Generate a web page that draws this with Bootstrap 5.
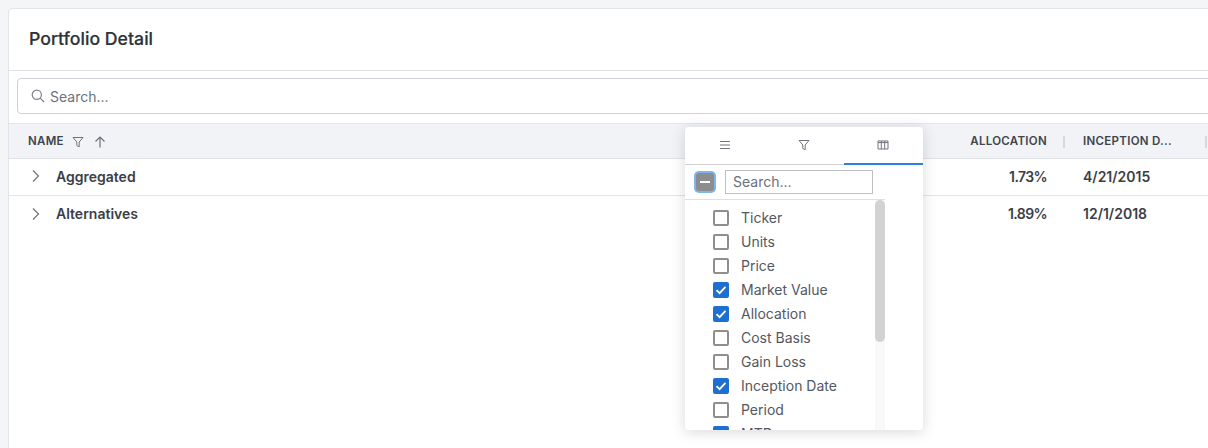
<!DOCTYPE html>
<html lang="en">
<head>
<meta charset="utf-8">
<title>Portfolio Detail</title>
<link href="https://cdn.jsdelivr.net/npm/bootstrap@5.3.0/dist/css/bootstrap.min.css" rel="stylesheet">
<style>
html,body{height:448px;overflow:hidden}
body{background:#f4f5f7;font-family:Inter,"Liberation Sans",sans-serif;color:#393d45;padding:8px 0 0 8px}
.pf-card{background:#fff;border:1px solid #e3e4e8;border-radius:4px 0 0 0;height:445px;margin-right:-40px;position:relative;overflow:hidden}
.pf-head{height:62px;border-bottom:1px solid #e2e3e6;padding:0 0 2px 20px}
.pf-title{font-size:17.7px;font-weight:500;color:#2f3239;margin:0;-webkit-text-stroke:.2px #2f3239}
.pf-search{height:36px;margin:7px 0 9px 8px;border:1px solid #cfd1da;border-radius:4px;padding-left:13px;color:#6c7280;font-size:14px;gap:5px}
.pf-thead{height:36px;padding-top:2px;background:#f1f3f6;border-top:1px solid #e5e6ea;border-bottom:1px solid #dfe1e5;font-size:11.5px;font-weight:600;color:#40444c;letter-spacing:.3px}
.pf-row{height:37px;padding-bottom:2px;font-size:14px;font-weight:600;color:#3b3e46}
.pf-row-line{border-bottom:1px solid #e4e5e8}
.pf-name{flex:1 1 auto;padding-left:19px;min-width:0}
.pf-name-row{padding-left:23px}
.pf-chev{width:24px;flex:none}
.pf-alloc{width:200px;flex:none;padding-right:18px;text-align:right;position:relative}
.pf-pct{letter-spacing:-.6px}
.pf-date{width:142px;flex:none;padding-left:18px;position:relative}
.pf-rest{width:40px;flex:none}
.pf-sep{position:absolute;right:0;top:50%;margin-top:-6px;width:2px;height:12px;background:#d6d8dd}
.pf-ico1{margin-left:8px}
.pf-ico2{margin-left:9px}
.pf-menu{position:absolute;left:676px;top:118px;width:238px;height:303px;background:#fff;border-radius:4px;box-shadow:0 2px 14px rgba(60,66,80,.2);overflow:hidden;z-index:5}
.pf-tabs{height:38px;border-bottom:1px solid #cfd0d3}
.pf-tab{flex:1;height:38px;margin-bottom:-1px;padding-bottom:3px}
.pf-tab-on{border-bottom:2px solid #2b80e0;padding-bottom:1px}
.pf-filter{height:35px;border-bottom:1px solid #dee0e3;margin-right:38px;padding-left:11px;gap:9px}
.pf-tri{width:18px;height:18px;border-radius:3px;background:#8d8d8d;box-shadow:0 0 0 2px #7db5f0;position:relative;flex:none}
.pf-tri::after{content:"";position:absolute;left:4px;right:4px;top:8px;height:2px;background:#fff}
.pf-input{width:148px;height:24px;border:1px solid #bdbfc1;padding-left:7px;font-size:14px;color:#6b6f78;line-height:22px;margin-left:2px}
.pf-body{position:relative;padding-left:28px;padding-top:6px}
.pf-item{height:24px;font-size:14px;color:#54585f;gap:12px}
.pf-label{margin-top:-2px}
.pf-box{width:16px;height:16px;border:2px solid #8e8e8e;border-radius:2px;flex:none;background:#fff}
.pf-box-on{background:#1f6fd0;border-color:#1f6fd0}
.pf-box svg{display:block}
.pf-track{position:absolute;left:190px;top:0;width:10px;height:240px;background:#f8f8f8}
.pf-thumb{width:10px;height:142px;background:#d2d2d2;border-radius:5px}
</style>
</head>
<body>
<div class="pf-card">
  <div class="pf-head d-flex align-items-center"><h1 class="pf-title">Portfolio Detail</h1></div>
  <div class="pf-search d-flex align-items-center">
    <svg width="14" height="14" viewBox="0 0 14 14" fill="none" stroke="#7c808a" stroke-width="1.2"><circle cx="5.8" cy="5.8" r="4.6"/><path d="M9.2 9.2 13 13"/></svg>
    <span>Search...</span>
  </div>
  <div class="pf-thead d-flex align-items-center">
    <div class="pf-name d-flex align-items-center">
      <span>NAME</span>
      <svg class="pf-ico1" width="12" height="12" viewBox="0 0 12 12" fill="none" stroke="#6f737c" stroke-width="1"><path d="M1 1.5h10L7.2 6v4.8L4.8 9.5V6z"/></svg>
      <svg class="pf-ico2" width="14" height="14" viewBox="0 0 14 14" fill="none" stroke="#6f737c" stroke-width="1.2"><path d="M7 12.5V2M2.5 6.5 7 2l4.5 4.5"/></svg>
    </div>
    <div class="pf-alloc">ALLOCATION<span class="pf-sep"></span></div>
    <div class="pf-date">INCEPTION D...<span class="pf-sep"></span></div>
    <div class="pf-rest"></div>
  </div>
  <div class="pf-row pf-row-line d-flex align-items-center">
    <div class="pf-name pf-name-row d-flex align-items-center">
      <svg class="pf-chev" width="24" height="14" viewBox="0 0 24 14" fill="none" stroke="#6f737c" stroke-width="1.2"><path d="M1 1.5 6.5 7 1 12.5"/></svg>
      <span>Aggregated</span>
    </div>
    <div class="pf-alloc"><span class="pf-pct">1.73%</span></div>
    <div class="pf-date">4/21/2015</div>
    <div class="pf-rest"></div>
  </div>
  <div class="pf-row d-flex align-items-center">
    <div class="pf-name pf-name-row d-flex align-items-center">
      <svg class="pf-chev" width="24" height="14" viewBox="0 0 24 14" fill="none" stroke="#6f737c" stroke-width="1.2"><path d="M1 1.5 6.5 7 1 12.5"/></svg>
      <span>Alternatives</span>
    </div>
    <div class="pf-alloc"><span class="pf-pct">1.89%</span></div>
    <div class="pf-date">12/1/2018</div>
    <div class="pf-rest"></div>
  </div>
  <div class="pf-menu">
    <div class="pf-tabs d-flex">
      <div class="pf-tab d-flex align-items-center justify-content-center"><svg width="12" height="10" viewBox="0 0 12 10" fill="none" stroke="#70747d" stroke-width="1"><path d="M1 1.5h10M1 5h10M1 8.5h10"/></svg></div>
      <div class="pf-tab d-flex align-items-center justify-content-center"><svg width="12" height="12" viewBox="0 0 12 12" fill="none" stroke="#70747d" stroke-width="1"><path d="M1 1.5h10L7.2 6v4.8L4.8 9.5V6z"/></svg></div>
      <div class="pf-tab pf-tab-on d-flex align-items-center justify-content-center"><svg width="12" height="10" viewBox="0 0 12 10" fill="none" stroke="#70747d" stroke-width="1"><path d="M1 1h10v8H1zM1 2.6h10M4.3 1v8M7.7 1v8"/></svg></div>
    </div>
    <div class="pf-filter d-flex align-items-center"><span class="pf-tri"></span><div class="pf-input">Search...</div></div>
    <div class="pf-body">
      <div class="pf-track"><div class="pf-thumb"></div></div>
      <div class="pf-item d-flex align-items-center"><span class="pf-box"></span><span class="pf-label">Ticker</span></div>
      <div class="pf-item d-flex align-items-center"><span class="pf-box"></span><span class="pf-label">Units</span></div>
      <div class="pf-item d-flex align-items-center"><span class="pf-box"></span><span class="pf-label">Price</span></div>
      <div class="pf-item d-flex align-items-center"><span class="pf-box pf-box-on"><svg width="12" height="12" viewBox="0 0 12 12" fill="none" stroke="#fff" stroke-width="1.8"><path d="M1.5 6.2 4.6 9.2 10.5 2.8"/></svg></span><span class="pf-label">Market Value</span></div>
      <div class="pf-item d-flex align-items-center"><span class="pf-box pf-box-on"><svg width="12" height="12" viewBox="0 0 12 12" fill="none" stroke="#fff" stroke-width="1.8"><path d="M1.5 6.2 4.6 9.2 10.5 2.8"/></svg></span><span class="pf-label">Allocation</span></div>
      <div class="pf-item d-flex align-items-center"><span class="pf-box"></span><span class="pf-label">Cost Basis</span></div>
      <div class="pf-item d-flex align-items-center"><span class="pf-box"></span><span class="pf-label">Gain Loss</span></div>
      <div class="pf-item d-flex align-items-center"><span class="pf-box pf-box-on"><svg width="12" height="12" viewBox="0 0 12 12" fill="none" stroke="#fff" stroke-width="1.8"><path d="M1.5 6.2 4.6 9.2 10.5 2.8"/></svg></span><span class="pf-label">Inception Date</span></div>
      <div class="pf-item d-flex align-items-center"><span class="pf-box"></span><span class="pf-label">Period</span></div>
      <div class="pf-item d-flex align-items-center"><span class="pf-box pf-box-on"><svg width="12" height="12" viewBox="0 0 12 12" fill="none" stroke="#fff" stroke-width="1.8"><path d="M1.5 6.2 4.6 9.2 10.5 2.8"/></svg></span><span class="pf-label">MTD</span></div>
    </div>
  </div>
</div>
<script src="https://cdn.jsdelivr.net/npm/bootstrap@5.3.0/dist/js/bootstrap.bundle.min.js"></script>
</body>
</html>
